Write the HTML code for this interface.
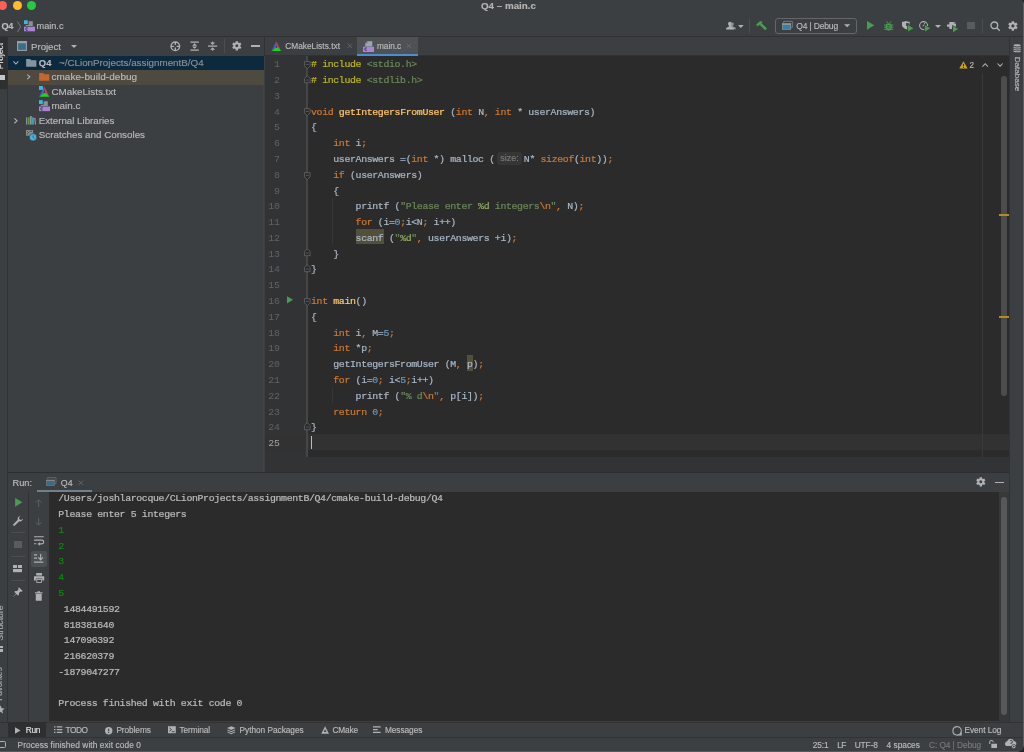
<!DOCTYPE html>
<html lang="en">
<head>
<meta charset="utf-8">
<title>Q4 – main.c</title>
<style>
*{box-sizing:border-box;margin:0;padding:0}
html,body{width:1024px;height:752px;overflow:hidden;background:#3c3f41}
body{position:relative;font-family:"Liberation Sans",sans-serif;font-size:9.3px;color:#bbbbbb;-webkit-font-smoothing:antialiased}
.abs{position:absolute}
.t{position:absolute;white-space:nowrap;line-height:12px;height:12px;-webkit-text-stroke:0.15px}
.mono{font-family:"Liberation Mono",monospace}
svg{position:absolute;overflow:visible}
/* ---------- frame ---------- */
#titlebar{left:0;top:0;width:1024px;height:16px;background:#3c3f41}
#navbar{left:0;top:16px;width:1024px;height:20.8px;background:#3c3f41;border-bottom:1px solid #323232}
#leftstrip{left:0;top:36.8px;width:8px;height:685px;background:#3c3f41;border-right:1px solid #323232}
#leftsel{left:0;top:36.8px;width:7.4px;height:52px;background:#2d2f30}
#rightstrip{left:1009px;top:36.8px;width:15px;height:685px;background:#3c3f41;border-left:1px solid #323232}
#rightedge{left:1023px;top:3px;width:1px;height:745px;background:#5c5f61}
/* project */
#projhead{left:8px;top:36.8px;width:256px;height:19.2px;background:#3c3f41}
#proj{left:8px;top:56px;width:256px;height:416px;background:#3c3f41}
#projdiv{left:264px;top:36.8px;width:1px;height:19.2px;background:#323232}
#projdiv2{left:263.2px;top:56px;width:1.3px;height:416.5px;background:#414446}
.row{position:absolute;left:8px;width:256px;height:14.4px}
/* editor */
#tabs{left:265px;top:36.8px;width:744px;height:19.2px;background:#3c3f41;border-bottom:1px solid #323232}
#tabsel{left:357.2px;top:36.8px;width:61px;height:19.2px;background:#4e5254;border-bottom:2.2px solid #4a8dd0}
#gutter{left:264.5px;top:56px;width:43.5px;height:401px;background:#313335;border-right:1px solid #313335}
#editor{left:308px;top:56px;width:701px;height:401px;background:#2b2b2b}
#curline{left:264.5px;top:434.3px;width:744.5px;height:15.8px;background:#323232}
#edbottom{left:264.5px;top:457px;width:744.5px;height:16px;background:#313335}
#margin{left:982px;top:56px;width:1px;height:401px;background:#3a3a3a}
.ln{position:absolute;left:265px;width:14.5px;text-align:right;color:#606366;font-family:"Liberation Mono",monospace;font-size:9.28px;line-height:15.79px;height:15.79px}
.cl{position:absolute;left:311px;white-space:pre;color:#a9b7c6;font-family:"Liberation Mono",monospace;font-size:9.28px;line-height:15.79px;height:15.79px}
.k{color:#cc7832}.s{color:#6a8759}.n{color:#6897bb}.f{color:#ffc66d}.p{color:#bbb529}
/* run */
#runhead{left:8px;top:472px;width:1001.5px;height:20.5px;background:#3c3f41;border-top:1px solid #2c2e2f}
#runbody{left:49px;top:492.4px;width:960.5px;height:229px;background:#2b2b2b}
#runleft{left:8px;top:492.4px;width:41px;height:229px;background:#3c3f41}
.co{position:absolute;left:58px;white-space:pre;color:#bbbbbb;font-family:"Liberation Mono",monospace;font-size:9.28px;line-height:15.79px;height:15.79px}
/* bottom */
#toolbar2{left:0;top:721.6px;width:1024px;height:17px;background:#3c3f41;border-top:1px solid #323232}
#textlayer{left:0;top:0;width:1024px;height:752px;will-change:transform}
#status{left:0;top:737.4px;width:1024px;height:14px;background:#3c3f41;border-top:1px solid #323232}
.cl,.co{-webkit-text-stroke:0.22px}.ln,.cl{font-size:9.9px;letter-spacing:-0.356px}.cl{left:311.0px}.fm{color:#8fa764}.w{}.hint{display:inline-block;width:29px;height:1px}
.co{left:58.3px;font-size:9.9px;letter-spacing:-0.356px}
</style>
</head>
<body>
<!-- frame -->
<div class="abs" id="titlebar"></div>
<div class="abs" id="navbar"></div>
<div class="abs" id="leftstrip"></div>
<div class="abs" id="leftsel"></div>
<div class="abs" id="projhead"></div>
<div class="abs" id="proj"></div>
<div class="abs" id="projdiv"></div>
<div class="abs" id="projdiv2"></div>
<div class="abs" id="tabs"></div>
<div class="abs" id="tabsel"></div>
<div class="abs" id="gutter"></div>
<div class="abs" id="editor"></div>
<div class="abs" id="curline"></div>
<div class="abs" id="margin"></div>
<div class="abs" id="edbottom"></div>
<div class="abs" id="runhead"></div>
<div class="abs" id="runleft"></div>
<div class="abs" id="runbody"></div>
<div class="abs" id="rightstrip"></div>
<div class="abs" id="toolbar2"></div>
<div class="abs" id="status"></div>
<div class="abs" id="rightedge"></div>
<div class="abs" id="textlayer">
<div class="abs" style="left:-2.1px;top:1px;width:9px;height:9px;border-radius:50%;background:#fe5f57"></div>
<div class="abs" style="left:13.0px;top:1px;width:9px;height:9px;border-radius:50%;background:#febc2e"></div>
<div class="abs" style="left:27.1px;top:1px;width:9px;height:9px;border-radius:50%;background:#28c840"></div>
<div class="abs" style="left:1021px;top:0;width:3px;height:3px;background:radial-gradient(circle at 0 100%,rgba(0,0,0,0) 2.4px,#232526 3.2px)"></div>
<svg style="left:16.50px;top:20.50px" width="4.20" height="11.50" viewBox="0 0 4 11" ><path d="M0.5,0.5L3.5,5.5L0.5,10.5" stroke="#7a7d80" stroke-width="0.9" fill="none"/></svg>
<svg style="left:23.50px;top:19.80px" width="11.00" height="11.60" viewBox="0 0 22 22" ><rect x="0" y="0" width="7.6" height="7.6" fill="#40b6e0"/><path d="M9.4,2H17.6V11.6H3.4V9.2H9.4Z" fill="#87939a"/><rect x="0" y="12.8" width="22" height="9.2" fill="#a985d3"/><path d="M7.4,15.4A2.6,2.6 0 1,0 7.4,19.8" stroke="#2e2040" stroke-width="1.7" fill="none"/></svg>
<svg style="left:726.10px;top:21.00px" width="9.90" height="9.00" viewBox="-0.4 0 16 13" ><path d="M9.8,1.2c1.5,0 2.5,1.2 2.5,2.8c0,1.3-0.6,2.5-1.4,3l0.1,1.2l3.6,1.6c0.6,0.3 0.9,0.8 0.9,1.5V12.6H6V11.2z" fill="#8c8f91"/><path d="M6,0.4c1.8,0 3,1.4 3,3.2c0,1.5-0.7,2.8-1.6,3.4l0.1,1.3l3.8,1.7c0.7,0.3 1.1,0.9 1.1,1.7V13H-0.4V11.7c0-0.8 0.4-1.4 1.1-1.7l3.8-1.7l0.1-1.3C3.7,6.4 3,5.1 3,3.6C3,1.8 4.2,0.4 6,0.4z" fill="#afb1b3"/></svg>
<svg style="left:738.10px;top:25.00px" width="5.70" height="3.00" viewBox="0 0 10 5" ><path d="M0,0H10L5,5Z" fill="#afb1b3"/></svg>
<div class="abs" style="left:749.3px;top:18.8px;width:1px;height:14.0px;background:#4b4e50"></div>
<svg style="left:756.00px;top:20.60px" width="11.00" height="9.60" viewBox="0 0 14 12" ><path d="M0.1,4.4L5.0,0.1L8.9,0.5L7,2.4L14,9.3L11.6,11.8L4.7,4.8L2.3,6.9Z" fill="#499c54"/></svg>
<div class="abs" style="left:775.2px;top:18.1px;width:82px;height:15.6px;border:1px solid #646769;border-radius:3px"></div>
<svg style="left:782.10px;top:21.00px" width="10.60" height="8.70" viewBox="0 0 22 18" ><path d="M3.5,3.6V0.6H21.4V13.2H19" stroke="#9aa0a4" stroke-width="1.2" fill="none"/><rect x="0.6" y="5.6" width="17.6" height="11.6" fill="#3a7f9f" stroke="#9aa0a4" stroke-width="1.2"/><rect x="0.6" y="5.6" width="17.6" height="2.2" fill="#9aa0a4"/></svg>
<svg style="left:843.90px;top:24.10px" width="6.30" height="3.50" viewBox="0 0 10 5" ><path d="M0,0H10L5,5Z" fill="#afb1b3"/></svg>
<svg style="left:866.90px;top:21.40px" width="7.30" height="8.70" viewBox="0 0 10 12" ><path d="M0,0L10,6L0,12Z" fill="#499c54"/></svg>
<svg style="left:883.80px;top:21.00px" width="9.50" height="9.80" viewBox="0 0 12 12.2" ><rect x="2.1" y="2.8" width="7.8" height="9.2" rx="3.8" fill="#499c54"/><path d="M3.2,0.3L4.9,2.6M8.8,0.3L7.1,2.6" stroke="#499c54" stroke-width="1.2" fill="none"/><path d="M0.2,5H2.4M9.6,5H11.8M0.2,7.7H2.4M9.6,7.7H11.8M0.4,10.6H2.6M9.4,10.6H11.6" stroke="#499c54" stroke-width="1.25" fill="none"/><path d="M3.9,5.9H8.1M3.9,8.6H8.1" stroke="#3c3f41" stroke-width="1.05"/></svg>
<svg style="left:901.80px;top:21.40px" width="7.70" height="8.80" viewBox="0 -0.2 10 11.4" ><path d="M0,0.8C2.5,0.8 4,0.3 5,-0.2C6,0.3 7.5,0.8 10,0.8V5.6H7.2V11C3.5,9.8 0,8 0,4.6Z" fill="#afb1b3"/><path d="M5,0.9V10" stroke="#3c3f41" stroke-width="0" /></svg>
<div class="abs" style="left:906.2px;top:22.6px;width:3.6px;height:3.4px;background:#4a4d4f;border-radius:0 2px 0 0"></div>
<svg style="left:907.80px;top:24.90px" width="5.40" height="6.70" viewBox="0 0 10 12" ><path d="M0,0L10,6L0,12Z" fill="#499c54" stroke="#3c3f41" stroke-width="2.6" paint-order="stroke"/></svg>
<svg style="left:919.00px;top:21.20px" width="9.20" height="9.20" viewBox="0 0 12 12" ><circle cx="6" cy="6" r="5.2" stroke="#afb1b3" stroke-width="1.35" fill="none"/><path d="M6,6.6L7.6,2.6" stroke="#afb1b3" stroke-width="1.2"/><path d="M6,6.4H4.6" stroke="#afb1b3" stroke-width="1.0"/></svg>
<svg style="left:924.80px;top:24.90px" width="5.20" height="6.70" viewBox="0 0 10 12" ><path d="M0,0L10,6L0,12Z" fill="#499c54" stroke="#3c3f41" stroke-width="2.6" paint-order="stroke"/></svg>
<svg style="left:935.00px;top:25.00px" width="6.00" height="3.00" viewBox="0 0 10 5" ><path d="M0,0H10L5,5Z" fill="#afb1b3"/></svg>
<svg style="left:947.00px;top:21.60px" width="9.00" height="7.20" viewBox="0 0 11.6 9" ><path d="M3,0H9.6V2H11.6V6H6.4V9H3V6H0V3.2H3Z" fill="#afb1b3"/><rect x="8.4" y="0.4" width="2.6" height="1.4" fill="#8c8f91"/></svg>
<svg style="left:953.10px;top:25.50px" width="5.20" height="6.20" viewBox="0 0 10 12" ><path d="M0,0L10,6L0,12Z" fill="#499c54" stroke="#3c3f41" stroke-width="2.6" paint-order="stroke"/></svg>
<div class="abs" style="left:967.1px;top:21.8px;width:7.8px;height:7.6px;background:#595c5e"></div>
<div class="abs" style="left:982.3px;top:18.9px;width:1px;height:14.0px;background:#4b4e50"></div>
<svg style="left:989.50px;top:20.60px" width="10.40" height="10.40" viewBox="0 0 13 13" ><circle cx="5.4" cy="5.4" r="4.2" stroke="#afb1b3" stroke-width="1.7" fill="none"/><path d="M8.4,8.4L12.2,12.2" stroke="#afb1b3" stroke-width="1.7"/></svg>
<svg style="left:1008.40px;top:21.10px" width="9.80" height="9.80" viewBox="0 0 16 16" ><path d="M5.92,2.48 L6.10,0.23 L9.90,0.23 L10.08,2.48 L11.74,3.44 L13.78,2.47 L15.68,5.76 L13.82,7.04 L13.82,8.96 L15.68,10.24 L13.78,13.53 L11.74,12.56 L10.08,13.52 L9.90,15.77 L6.10,15.77 L5.92,13.52 L4.26,12.56 L2.22,13.53 L0.32,10.24 L2.18,8.96 L2.18,7.04 L0.32,5.76 L2.22,2.47 L4.26,3.44Z M10.5,8 A2.5,2.5 0 1,0 5.5,8 A2.5,2.5 0 1,0 10.5,8Z" fill="#afb1b3" fill-rule="evenodd"/></svg>
<div class="row" style="top:55.8px;height:14.2px;background:#0d293e"></div>
<div class="row" style="top:70px;height:14.5px;background:#4e4a3f"></div>
<svg style="left:17.00px;top:41.00px" width="10.00" height="10.00" viewBox="0 0 10 10" ><rect x="0.6" y="0.6" width="8.8" height="8.8" fill="#356f88" stroke="#9aa0a4" stroke-width="1.1"/><rect x="0.6" y="0.6" width="8.8" height="1.7" fill="#9aa0a4"/></svg>
<svg style="left:71.00px;top:45.00px" width="6.00" height="3.00" viewBox="0 0 10 5" ><path d="M0,0H10L5,5Z" fill="#afb1b3"/></svg>
<svg style="left:170.20px;top:40.50px" width="10.60" height="10.60" viewBox="0 0 16 16" ><circle cx="8" cy="8" r="6.5" stroke="#afb1b3" stroke-width="2" fill="none"/><path d="M8,1.4V6M8,10V14.6M1.4,8H6M10,8H14.6" stroke="#afb1b3" stroke-width="2"/></svg>
<svg style="left:189.60px;top:40.90px" width="9.20" height="10.20" viewBox="0 0 14 14" ><path d="M0.6,1H13.4M0.6,13H13.4" stroke="#afb1b3" stroke-width="1.9"/><path d="M7,2.8L10.8,6.4H3.2ZM7,11.2L10.8,7.6H3.2Z" fill="#afb1b3"/></svg>
<svg style="left:208.00px;top:40.90px" width="9.20" height="10.20" viewBox="0 0 14 14" ><path d="M0,7H14" stroke="#afb1b3" stroke-width="1.9"/><path d="M7,5.2L10.8,1.4H3.2ZM7,8.8L10.8,12.6H3.2Z" fill="#afb1b3"/><path d="M7,0V2M7,12V14" stroke="#afb1b3" stroke-width="1.6"/></svg>
<div class="abs" style="left:224.4px;top:38.8px;width:1px;height:14.2px;background:#4b4e50"></div>
<svg style="left:231.60px;top:41.10px" width="9.60" height="9.60" viewBox="0 0 16 16" ><path d="M5.92,2.48 L6.10,0.23 L9.90,0.23 L10.08,2.48 L11.74,3.44 L13.78,2.47 L15.68,5.76 L13.82,7.04 L13.82,8.96 L15.68,10.24 L13.78,13.53 L11.74,12.56 L10.08,13.52 L9.90,15.77 L6.10,15.77 L5.92,13.52 L4.26,12.56 L2.22,13.53 L0.32,10.24 L2.18,8.96 L2.18,7.04 L0.32,5.76 L2.22,2.47 L4.26,3.44Z M10.5,8 A2.5,2.5 0 1,0 5.5,8 A2.5,2.5 0 1,0 10.5,8Z" fill="#afb1b3" fill-rule="evenodd"/></svg>
<div class="abs" style="left:250.8px;top:45.3px;width:9.0px;height:1.3px;background:#afb1b3"></div>
<svg style="left:13.30px;top:61.20px" width="5.80" height="3.60" viewBox="0 0 6 4" ><path d="M0.3,0.4L3,3.4L5.7,0.4" stroke="#afb1b3" stroke-width="1.14" fill="none"/></svg>
<svg style="left:25.70px;top:59.10px" width="10.50" height="7.80" viewBox="0 0 21 16" ><path d="M0,0H8.2L10.4,2.6H21V16H0Z" fill="#8595a0"/></svg>
<svg style="left:27.10px;top:74.30px" width="3.40" height="5.70" viewBox="0 0 4 6" ><path d="M0.4,0.3L3.4,3L0.4,5.7" stroke="#afb1b3" stroke-width="1.29" fill="none"/></svg>
<svg style="left:38.60px;top:73.10px" width="10.50" height="7.80" viewBox="0 0 21 16" ><path d="M0,0H8.2L10.4,2.6H21V16H0Z" fill="#c8642d"/></svg>
<svg style="left:38.60px;top:86.00px" width="10.50" height="11.00" viewBox="0 0 21 22" ><polygon points="10.4,0.3 0.3,21.6 9.2,14.6 10.9,9.2" fill="#4360d6"/><polygon points="10.4,0.3 20.8,21.6 13.2,13.2 10.9,9.2" fill="#d8404a"/><polygon points="0.3,21.6 20.8,21.6 13.2,13.2 9.2,14.6" fill="#27cf2c"/><polygon points="10.9,9.2 9.2,14.6 13.2,13.2" fill="#3b3560"/><rect x="0" y="0" width="7.8" height="7.8" fill="#40b6e0"/></svg>
<svg style="left:38.60px;top:100.30px" width="11.00" height="11.30" viewBox="0 0 22 22" ><rect x="0" y="0" width="7.6" height="7.6" fill="#40b6e0"/><path d="M9.4,2H17.6V11.6H3.4V9.2H9.4Z" fill="#87939a"/><rect x="0" y="12.8" width="22" height="9.2" fill="#a985d3"/><path d="M7.4,15.4A2.6,2.6 0 1,0 7.4,19.8" stroke="#2e2040" stroke-width="1.7" fill="none"/></svg>
<svg style="left:14.00px;top:117.70px" width="3.60" height="5.60" viewBox="0 0 4 6" ><path d="M0.4,0.3L3.4,3L0.4,5.7" stroke="#afb1b3" stroke-width="1.22" fill="none"/></svg>
<svg style="left:26.00px;top:115.60px" width="10.20" height="8.60" viewBox="0 0 11.2 10" ><rect x="0" y="1.6" width="1.1" height="8.4" fill="#afb1b3"/><rect x="2.2" y="1.6" width="1.5" height="8.4" fill="#62b543"/><rect x="4.6" y="0" width="1.5" height="10" fill="#afb1b3"/><rect x="6.9" y="1.6" width="1.8" height="8.4" fill="#40b6e0"/><path d="M9.4,2.2L10.5,2L11.2,10H10.1Z" fill="#afb1b3"/></svg>
<svg style="left:26.10px;top:129.90px" width="11.00" height="11.00" viewBox="0 0 12.4 12.4" ><rect x="0" y="0" width="8" height="6.4" fill="#8b8e90"/><path d="M1.2,1.4L3,3L1.2,4.6" stroke="#3c3f41" stroke-width="0.9" fill="none"/><path d="M4,1.4H7" stroke="#3c3f41" stroke-width="0.9"/><circle cx="8" cy="8.2" r="4.2" fill="#40b6e0" stroke="#3c3f41" stroke-width="0.8"/><path d="M8,6V8.4L9.6,9.6" stroke="#2b5a70" stroke-width="0.9" fill="none"/></svg>
<div class="abs" style="left:0;top:36px;width:7.6px;height:685px;overflow:hidden"><div class="t" style="left:-39.9px;top:13.6px;width:80px;text-align:center;transform:rotate(-90deg);font-size:8.5px;color:#dcdcdc">Project</div><div class="abs" style="left:-1px;top:39.2px;width:5.5px;height:4.6px;background:#c4c6c7"></div><div class="t" style="left:-39.9px;top:581px;width:80px;text-align:center;transform:rotate(-90deg);font-size:8.7px;color:#a9abad">Structure</div><div class="abs" style="left:0px;top:609.5px;width:3.4px;height:2.4px;background:#afb1b3"></div><div class="abs" style="left:0px;top:613.4px;width:3.4px;height:2.4px;background:#afb1b3"></div><div class="t" style="left:-39.9px;top:642.3px;width:80px;text-align:center;transform:rotate(-90deg);font-size:8.15px;color:#a9abad">Favorites</div><svg style="left:-4.2px;top:669px" width="8.8" height="8.8" viewBox="0 0 10 10"><path d="M5,0.3L6.4,3.6L9.8,3.9L7.2,6.2L8,9.6L5,7.8L2,9.6L2.8,6.2L0.2,3.9L3.6,3.6Z" fill="#afb1b3"/></svg></div>
<svg style="left:271.30px;top:41.00px" width="10.70" height="10.20" viewBox="0 0 21 22" ><polygon points="10.4,0.3 0.3,21.6 9.2,14.6 10.9,9.2" fill="#4360d6"/><polygon points="10.4,0.3 20.8,21.6 13.2,13.2 10.9,9.2" fill="#d8404a"/><polygon points="0.3,21.6 20.8,21.6 13.2,13.2 9.2,14.6" fill="#27cf2c"/><polygon points="10.9,9.2 9.2,14.6 13.2,13.2" fill="#3b3560"/></svg>
<svg style="left:346.60px;top:43.20px" width="5.60" height="5.60" viewBox="0 0 10 10" ><path d="M1,1L9,9M9,1L1,9" stroke="#6e7173" stroke-width="1.3" fill="none"/></svg>
<svg style="left:362.90px;top:40.80px" width="11.10" height="11.00" viewBox="0 0 22 22" ><path d="M8.6,0.6H18.4V10.8H4.2V5Z" fill="#9aa7b0"/><path d="M8.6,0.6V5H4.2Z" fill="#6f7a82"/><rect x="0" y="11.4" width="22" height="10.6" fill="#a985d3"/><path d="M7.4,14.0A2.6,2.6 0 1,0 7.4,18.4" stroke="#2e2040" stroke-width="1.7" fill="none"/></svg>
<svg style="left:406.30px;top:43.15px" width="5.70" height="5.70" viewBox="0 0 10 10" ><path d="M1,1L9,9M9,1L1,9" stroke="#6e7173" stroke-width="1.3" fill="none"/></svg>
<div class="abs" style="left:955px;top:57px;width:53px;height:15.7px;background:#2b2b2b"></div>
<svg style="left:958.70px;top:61.20px" width="8.90" height="7.90" viewBox="0 0 12 11" ><path d="M6,0.4L11.8,10.6H0.2Z" fill="#d5a21c"/><path d="M6,3.8V7.2" stroke="#2b2b2b" stroke-width="1.5"/><rect x="5.25" y="8.1" width="1.5" height="1.4" fill="#2b2b2b"/></svg>
<svg style="left:982.10px;top:62.90px" width="6.40" height="4.00" viewBox="0 0 8 5" ><path d="M0.6,4.4L4,0.9L7.4,4.4" stroke="#afb1b3" stroke-width="1.3" fill="none"/></svg>
<svg style="left:997.40px;top:63.20px" width="6.20" height="3.90" viewBox="0 0 8 5" ><path d="M0.6,0.6L4,4.1L7.4,0.6" stroke="#afb1b3" stroke-width="1.3" fill="none"/></svg>
<svg style="left:1012.50px;top:44.00px" width="8.20" height="8.60" viewBox="0 0 10 11" ><ellipse cx="5" cy="1.7" rx="4.6" ry="1.5" fill="#afb1b3"/><path d="M0.4,3V4.4A4.6,1.5 0 0,0 9.6,4.4V3A4.6,1.5 0 0,1 0.4,3Z" fill="#afb1b3"/><path d="M0.4,5.4V6.8A4.6,1.5 0 0,0 9.6,6.8V5.4A4.6,1.5 0 0,1 0.4,5.4Z" fill="#afb1b3"/><path d="M0.4,7.8V9.2A4.6,1.5 0 0,0 9.6,9.2V7.8A4.6,1.5 0 0,1 0.4,7.8Z" fill="#afb1b3"/></svg>
<div class="t" style="left:976.5px;top:67.7px;width:80px;text-align:center;transform:rotate(90deg);font-size:8.1px">Database</div>
<div class="abs" style="left:332.4px;top:197.6px;width:1px;height:47.3px;background:#363636"></div>
<div class="abs" style="left:332.4px;top:387.0px;width:1px;height:15.8px;background:#363636"></div>
<div class="abs" style="left:355.7px;top:229.0px;width:27.9px;height:15.4px;background:#52503a"></div>
<div class="abs" style="left:467.4px;top:355.2px;width:5.6px;height:15.4px;background:#52503a"></div>
<div class="abs" style="left:496.9px;top:151.9px;width:25.3px;height:12.8px;background:#363636;border-radius:3px"></div>
<div class="ln" style="top:57.35px;color:#606366">1</div>
<div class="cl" style="top:57.35px"><span class="p"># include </span><span class="s">&lt;stdio.h&gt;</span></div>
<div class="ln" style="top:73.13px;color:#606366">2</div>
<div class="cl" style="top:73.13px"><span class="p"># include </span><span class="s">&lt;stdlib.h&gt;</span></div>
<div class="ln" style="top:88.91px;color:#606366">3</div>
<div class="ln" style="top:104.69px;color:#606366">4</div>
<div class="cl" style="top:104.69px"><span class="k">void </span><span class="f">getIntegersFromUser</span> (<span class="k">int</span> N<span class="k">,</span> <span class="k">int</span> * userAnswers)</div>
<div class="ln" style="top:120.47px;color:#606366">5</div>
<div class="cl" style="top:120.47px">{</div>
<div class="ln" style="top:136.25px;color:#606366">6</div>
<div class="cl" style="top:136.25px">    <span class="k">int</span> i<span class="k">;</span></div>
<div class="ln" style="top:152.03px;color:#606366">7</div>
<div class="cl" style="top:152.03px">    userAnswers =(<span class="k">int</span> *) malloc (<span class="hint"></span>N* <span class="k">sizeof</span>(<span class="k">int</span>))<span class="k">;</span></div>
<div class="ln" style="top:167.81px;color:#606366">8</div>
<div class="cl" style="top:167.81px">    <span class="k">if</span> (userAnswers)</div>
<div class="ln" style="top:183.59px;color:#606366">9</div>
<div class="cl" style="top:183.59px">    {</div>
<div class="ln" style="top:199.37px;color:#606366">10</div>
<div class="cl" style="top:199.37px">        printf (<span class="s">&quot;Please enter </span><span class="fm">%d</span><span class="s"> integers</span><span class="k">\n</span><span class="s">&quot;</span><span class="k">,</span> N)<span class="k">;</span></div>
<div class="ln" style="top:215.15px;color:#606366">11</div>
<div class="cl" style="top:215.15px">        <span class="k">for</span> (i=<span class="n">0</span><span class="k">;</span>i&lt;N<span class="k">;</span> i++)</div>
<div class="ln" style="top:230.93px;color:#606366">12</div>
<div class="cl" style="top:230.93px">        <span class="w">scanf</span> (<span class="s">&quot;</span><span class="fm">%d</span><span class="s">&quot;</span><span class="k">,</span> userAnswers +i)<span class="k">;</span></div>
<div class="ln" style="top:246.71px;color:#606366">13</div>
<div class="cl" style="top:246.71px">    }</div>
<div class="ln" style="top:262.49px;color:#606366">14</div>
<div class="cl" style="top:262.49px">}</div>
<div class="ln" style="top:278.27px;color:#606366">15</div>
<div class="ln" style="top:294.05px;color:#606366">16</div>
<div class="cl" style="top:294.05px"><span class="k">int</span> <span class="f">main</span>()</div>
<div class="ln" style="top:309.83px;color:#606366">17</div>
<div class="cl" style="top:309.83px">{</div>
<div class="ln" style="top:325.61px;color:#606366">18</div>
<div class="cl" style="top:325.61px">    <span class="k">int</span> i<span class="k">,</span> M=<span class="n">5</span><span class="k">;</span></div>
<div class="ln" style="top:341.39px;color:#606366">19</div>
<div class="cl" style="top:341.39px">    <span class="k">int</span> *p<span class="k">;</span></div>
<div class="ln" style="top:357.17px;color:#606366">20</div>
<div class="cl" style="top:357.17px">    getIntegersFromUser (M<span class="k">,</span> <span class="w">p</span>)<span class="k">;</span></div>
<div class="ln" style="top:372.95px;color:#606366">21</div>
<div class="cl" style="top:372.95px">    <span class="k">for</span> (i=<span class="n">0</span><span class="k">;</span> i&lt;<span class="n">5</span><span class="k">;</span>i++)</div>
<div class="ln" style="top:388.73px;color:#606366">22</div>
<div class="cl" style="top:388.73px">        printf (<span class="s">&quot;% d</span><span class="k">\n</span><span class="s">&quot;</span><span class="k">,</span> p[i])<span class="k">;</span></div>
<div class="ln" style="top:404.51px;color:#606366">23</div>
<div class="cl" style="top:404.51px">    <span class="k">return</span> <span class="n">0</span><span class="k">;</span></div>
<div class="ln" style="top:420.29px;color:#606366">24</div>
<div class="cl" style="top:420.29px">}</div>
<div class="ln" style="top:436.07px;color:#a4a3a3">25</div>
<div class="abs" style="left:311px;top:436.3px;width:1.3px;height:12.4px;background:#bbbbbb"></div>
<div class="abs" style="left:306.4px;top:56px;width:1.4px;height:401px;background:#454647"></div>
<svg style="left:303.70px;top:61.09px" width="6.60" height="8.40" viewBox="0 0 7 8.5" ><path d="M0.5,0.5H6.5V5L3.5,8L0.5,5Z" fill="#2b2b2b" stroke="#606366" stroke-width="0.9"/><path d="M2,3.4H5" stroke="#606366" stroke-width="0.9"/></svg>
<svg style="left:303.70px;top:74.67px" width="6.60" height="8.40" viewBox="0 0 7 8.5" ><path d="M0.5,8H6.5V3.5L3.5,0.5L0.5,3.5Z" fill="#2b2b2b" stroke="#606366" stroke-width="0.9"/><path d="M2,5.2H5" stroke="#606366" stroke-width="0.9"/></svg>
<svg style="left:303.70px;top:108.43px" width="6.60" height="8.40" viewBox="0 0 7 8.5" ><path d="M0.5,0.5H6.5V5L3.5,8L0.5,5Z" fill="#2b2b2b" stroke="#606366" stroke-width="0.9"/><path d="M2,3.4H5" stroke="#606366" stroke-width="0.9"/></svg>
<svg style="left:303.70px;top:171.55px" width="6.60" height="8.40" viewBox="0 0 7 8.5" ><path d="M0.5,0.5H6.5V5L3.5,8L0.5,5Z" fill="#2b2b2b" stroke="#606366" stroke-width="0.9"/><path d="M2,3.4H5" stroke="#606366" stroke-width="0.9"/></svg>
<svg style="left:303.70px;top:248.25px" width="6.60" height="8.40" viewBox="0 0 7 8.5" ><path d="M0.5,8H6.5V3.5L3.5,0.5L0.5,3.5Z" fill="#2b2b2b" stroke="#606366" stroke-width="0.9"/><path d="M2,5.2H5" stroke="#606366" stroke-width="0.9"/></svg>
<svg style="left:303.70px;top:264.03px" width="6.60" height="8.40" viewBox="0 0 7 8.5" ><path d="M0.5,8H6.5V3.5L3.5,0.5L0.5,3.5Z" fill="#2b2b2b" stroke="#606366" stroke-width="0.9"/><path d="M2,5.2H5" stroke="#606366" stroke-width="0.9"/></svg>
<svg style="left:303.70px;top:297.79px" width="6.60" height="8.40" viewBox="0 0 7 8.5" ><path d="M0.5,0.5H6.5V5L3.5,8L0.5,5Z" fill="#2b2b2b" stroke="#606366" stroke-width="0.9"/><path d="M2,3.4H5" stroke="#606366" stroke-width="0.9"/></svg>
<svg style="left:303.70px;top:421.83px" width="6.60" height="8.40" viewBox="0 0 7 8.5" ><path d="M0.5,8H6.5V3.5L3.5,0.5L0.5,3.5Z" fill="#2b2b2b" stroke="#606366" stroke-width="0.9"/><path d="M2,5.2H5" stroke="#606366" stroke-width="0.9"/></svg>
<svg style="left:286.70px;top:296.40px" width="6.00" height="7.60" viewBox="0 0 10 12" ><path d="M0,0L10,6L0,12Z" fill="#499c54"/></svg>
<div class="abs" style="left:1001.1px;top:75.7px;width:6px;height:320.5px;border-radius:3px;background:#4c4c4c"></div>
<div class="abs" style="left:999px;top:213.9px;width:10px;height:2.2px;background:#b58d1c"></div>
<div class="abs" style="left:999px;top:315.8px;width:10px;height:2.2px;background:#b58d1c"></div>
<div class="abs" style="left:49px;top:492.4px;width:960px;height:229px;overflow:hidden">
<div class="co" style="top:-1.05px;left:9.30px;">/Users/joshlarocque/CLionProjects/assignmentB/Q4/cmake-build-debug/Q4</div>
<div class="co" style="top:14.73px;left:9.30px;">Please enter 5 integers</div>
<div class="co" style="top:30.51px;left:9.30px;color:#0a8a0a;">1</div>
<div class="co" style="top:46.29px;left:9.30px;color:#0a8a0a;">2</div>
<div class="co" style="top:62.07px;left:9.30px;color:#0a8a0a;">3</div>
<div class="co" style="top:77.85px;left:9.30px;color:#0a8a0a;">4</div>
<div class="co" style="top:93.63px;left:9.30px;color:#0a8a0a;">5</div>
<div class="co" style="top:109.41px;left:9.30px;"> 1484491592</div>
<div class="co" style="top:125.19px;left:9.30px;"> 818381640</div>
<div class="co" style="top:140.97px;left:9.30px;"> 147096392</div>
<div class="co" style="top:156.75px;left:9.30px;"> 216620379</div>
<div class="co" style="top:172.53px;left:9.30px;">-1879047277</div>
<div class="co" style="top:204.09px;left:9.30px;">Process finished with exit code 0</div>
</div>
<svg opacity="0.72" style="left:46.30px;top:477.30px" width="10.30" height="9.20" viewBox="0 0 22 18" ><path d="M3.5,3.6V0.6H21.4V13.2H19" stroke="#9aa0a4" stroke-width="1.2" fill="none"/><rect x="0.6" y="5.6" width="17.6" height="11.6" fill="#3a7f9f" stroke="#9aa0a4" stroke-width="1.2"/><rect x="0.6" y="5.6" width="17.6" height="2.2" fill="#9aa0a4"/></svg>
<svg style="left:78.30px;top:480.25px" width="5.50" height="5.50" viewBox="0 0 10 10" ><path d="M1,1L9,9M9,1L1,9" stroke="#6e7173" stroke-width="1.3" fill="none"/></svg>
<div class="abs" style="left:37px;top:490px;width:55.2px;height:2.4px;background:#73808a"></div>
<svg style="left:976.10px;top:477.40px" width="9.60" height="9.60" viewBox="0 0 16 16" ><path d="M5.92,2.48 L6.10,0.23 L9.90,0.23 L10.08,2.48 L11.74,3.44 L13.78,2.47 L15.68,5.76 L13.82,7.04 L13.82,8.96 L15.68,10.24 L13.78,13.53 L11.74,12.56 L10.08,13.52 L9.90,15.77 L6.10,15.77 L5.92,13.52 L4.26,12.56 L2.22,13.53 L0.32,10.24 L2.18,8.96 L2.18,7.04 L0.32,5.76 L2.22,2.47 L4.26,3.44Z M10.5,8 A2.5,2.5 0 1,0 5.5,8 A2.5,2.5 0 1,0 10.5,8Z" fill="#afb1b3" fill-rule="evenodd"/></svg>
<div class="abs" style="left:994.8px;top:481.6px;width:9.3px;height:1.3px;background:#afb1b3"></div>
<svg style="left:14.80px;top:498.30px" width="7.50" height="8.70" viewBox="0 0 10 12" ><path d="M0,0L10,6L0,12Z" fill="#499c54"/></svg>
<svg style="left:13.00px;top:516.00px" width="10.00" height="10.00" viewBox="0 0 15 15" ><path d="M11.2,0.3A3.9,3.9 0 0,0 7.2,5.6L0.6,12.2A1.5,1.5 0 0,0 2.8,14.4L9.4,7.8A3.9,3.9 0 0,0 14.7,3.8L12.4,6.1L9.9,5.1L8.9,2.6Z" fill="#afb1b3"/></svg>
<div class="abs" style="left:11.0px;top:532.4px;width:13.8px;height:1px;background:#4b4e50"></div>
<div class="abs" style="left:14px;top:541px;width:8px;height:7.4px;background:#595c5e"></div>
<div class="abs" style="left:11.0px;top:555.8px;width:13.8px;height:1px;background:#4b4e50"></div>
<svg style="left:13.30px;top:564.80px" width="9.00" height="7.20" viewBox="0 0 9 7.2" ><rect x="0" y="0" width="4" height="3" fill="#afb1b3"/><rect x="5" y="0" width="4" height="3" fill="#afb1b3"/><rect x="0" y="4" width="9" height="3.2" fill="#afb1b3"/></svg>
<div class="abs" style="left:11.0px;top:580.0px;width:13.8px;height:1px;background:#4b4e50"></div>
<svg style="left:13.00px;top:587.20px" width="10.00" height="9.90" viewBox="0 0 14 14" ><path d="M8.2,0.4L13.6,5.8L12.2,6.6L10.6,6.2L8.4,8.4L8.2,11.2L6.8,12L4.6,9.8L0.4,13.8L0.2,13.6L4.2,9.4L2,7.2L2.8,5.8L5.6,5.6L7.8,3.4L7.4,1.8Z" fill="#afb1b3"/></svg>
<div class="abs" style="left:28.4px;top:492.4px;width:1px;height:229.0px;background:#323232"></div>
<svg style="left:35.00px;top:498.80px" width="7.30" height="9.00" viewBox="0 0 10 12" ><path d="M5,11V1.2M1,5L5,1L9,5" stroke="#5e6162" stroke-width="1.3" fill="none"/></svg>
<svg style="left:35.00px;top:517.20px" width="7.30" height="9.00" viewBox="0 0 10 12" ><path d="M5,1V10.8M1,7L5,11L9,7" stroke="#5e6162" stroke-width="1.3" fill="none"/></svg>
<svg style="left:33.80px;top:536.00px" width="9.80" height="10.00" viewBox="0 0 13 13.4" ><path d="M0,1H13M0,5.6H10.4A2.4,2.4 0 0,1 10.4,10.6H6.6M0,10.4H3" stroke="#afb1b3" stroke-width="1.5" fill="none"/><path d="M7.6,8L4.8,10.6L7.6,13.2Z" fill="#afb1b3"/></svg>
<div class="abs" style="left:31px;top:551px;width:15.8px;height:15.8px;border-radius:2px;background:#4c5052"></div>
<svg style="left:34.00px;top:554.40px" width="9.30" height="8.80" viewBox="0 0 12 11.4" ><path d="M0,1.2H4M0,5.2H4M0,10.6H12" stroke="#afb1b3" stroke-width="1.6"/><path d="M8.6,0V7M5.6,4.4L8.6,7.6L11.6,4.4" stroke="#afb1b3" stroke-width="1.5" fill="none"/></svg>
<svg style="left:33.80px;top:573.00px" width="10.20" height="10.00" viewBox="0 0 14 13.6" ><rect x="3" y="0" width="8" height="3.4" fill="#afb1b3"/><path d="M0,4.4H14V10.4H11.4V7.6H2.6V10.4H0Z" fill="#afb1b3"/><rect x="3.8" y="8.8" width="6.4" height="4.2" fill="none" stroke="#afb1b3" stroke-width="1.2"/></svg>
<svg style="left:35.00px;top:591.00px" width="7.50" height="9.80" viewBox="0 0 10 13.2" ><path d="M3.4,1.6V0.2H6.6V1.6H10V3.2H0V1.6Z" fill="#afb1b3"/><path d="M1,4.2H9V12.4A0.8,0.8 0 0,1 8.2,13.2H1.8A0.8,0.8 0 0,1 1,12.4Z" fill="#afb1b3"/></svg>
<div class="abs" style="left:998.8px;top:492.4px;width:10.7px;height:229.4px;background:#36393a"></div>
<div class="abs" style="left:1001.1px;top:496.6px;width:6px;height:218.4px;border-radius:3px;background:#565859"></div>
<div class="abs" style="left:7.6px;top:722px;width:38px;height:15.4px;background:#2d2f30"></div>
<svg style="left:15.00px;top:726.80px" width="5.60" height="7.00" viewBox="0 0 10 12" ><path d="M0,0L10,6L0,12Z" fill="#afb1b3"/></svg>
<svg style="left:54.00px;top:726.40px" width="8.30" height="7.40" viewBox="0 0 9 8" ><path d="M0,1H1.6M0,4H1.6M0,7H1.6M3,1H9M3,4H9M3,7H9" stroke="#afb1b3" stroke-width="1.3"/></svg>
<svg style="left:104.80px;top:726.50px" width="7.40" height="7.40" viewBox="0 0 10 10" ><circle cx="5" cy="5" r="5" fill="#afb1b3"/><path d="M5,2.2V5.8" stroke="#3c3f41" stroke-width="1.5"/><rect x="4.25" y="6.8" width="1.5" height="1.4" fill="#3c3f41"/></svg>
<svg style="left:168.00px;top:726.40px" width="7.80" height="7.40" viewBox="0 0 10 9" ><rect x="0" y="0" width="10" height="9" fill="#afb1b3"/><path d="M1.8,2.2L4.4,4.4L1.8,6.6" stroke="#3c3f41" stroke-width="1.2" fill="none"/><path d="M5,7H8.4" stroke="#3c3f41" stroke-width="1.2"/></svg>
<svg style="left:227.40px;top:725.90px" width="8.60" height="8.40" viewBox="0 0 12 11.2" ><path d="M6,0L12,2.6L6,5.2L0,2.6Z" fill="#afb1b3"/><path d="M0.6,5.2L6,7.6L11.4,5.2M0.6,8L6,10.4L11.4,8" stroke="#afb1b3" stroke-width="1.4" fill="none"/></svg>
<svg style="left:320.90px;top:726.10px" width="8.20" height="8.00" viewBox="0 0 10 10" ><path d="M5,0.4L9.8,9.6H0.2Z" fill="#afb1b3"/><path d="M5,3.6L6.6,7.6H3.4Z" fill="#3c3f41"/></svg>
<svg style="left:373.20px;top:726.40px" width="7.70" height="7.20" viewBox="0 0 9 8.4" ><path d="M0,1H9M0,4.2H5.6M0,7.4H9" stroke="#afb1b3" stroke-width="1.5"/></svg>
<svg style="left:952.00px;top:726.20px" width="10.00" height="9.40" viewBox="0 0 10.6 10.2" ><path d="M5.4,0.7A4.6,4.6 0 1,0 9.9,6.5V9.6H6.2" stroke="#afb1b3" stroke-width="1.2" fill="none"/><path d="M5.4,0.7A4.6,4.6 0 0,1 9.9,6.5" stroke="#afb1b3" stroke-width="1.2" fill="none"/></svg>
<div class="abs" style="left:-2px;top:741px;width:8px;height:6.8px;border:1px solid #afb1b3;border-radius:1.5px"></div>
<svg style="left:989.00px;top:740.20px" width="8.00" height="8.00" viewBox="0 0 9 9" ><path d="M0.8,4.4V2.6A2,2 0 0,1 4.8,2.6" stroke="#afb1b3" stroke-width="1.2" fill="none"/><rect x="2.6" y="4.2" width="6.4" height="4.8" fill="#afb1b3"/></svg>
<svg style="left:1005.20px;top:739.40px" width="11.60" height="10.00" viewBox="0 0 12.4 10.8" ><path d="M1,7.6A3,3 0 0,1 2.2,2.4A4,4 0 0,1 9.6,2.2A2.8,2.8 0 0,1 11.6,6.6V7.6Z" fill="#afb1b3"/><path d="M5.4,1.8A1.5,1.5 0 1,1 6.4,4.4V5.4" stroke="#3c3f41" stroke-width="1" fill="none"/><circle cx="9.4" cy="8.2" r="2.3" fill="#afb1b3" stroke="#3c3f41" stroke-width="0.8"/><circle cx="9.4" cy="8.2" r="0.8" fill="#3c3f41"/></svg>
<div class="abs" style="left:1018px;top:746px;width:6px;height:6px;background:radial-gradient(circle at 0 0,rgba(0,0,0,0) 5.2px,#222425 6px)"></div>
<div class="abs" style="left:0;top:751.2px;width:1019px;height:0.8px;background:#56595b"></div>
<div class="t" style="left:481.00px;top:0.00px;font-size:9.80px;color:#b4b4b4;font-weight:bold;">Q4 – main.c</div>
<div class="t" style="left:1.50px;top:20.30px;font-size:9.20px;color:#bbbbbb;font-weight:bold;letter-spacing:-0.383px;">Q4</div>
<div class="t" style="left:36.50px;top:20.30px;font-size:9.16px;color:#bbbbbb;">main.c</div>
<div class="t" style="left:31.00px;top:40.70px;font-size:9.65px;color:#bbbbbb;">Project</div>
<div class="t" style="left:38.80px;top:56.90px;font-size:9.44px;color:#bbbbbb;font-weight:bold;">Q4</div>
<div class="t" style="left:59.00px;top:56.90px;font-size:9.80px;color:#8c9196;">~/CLionProjects/assignmentB/Q4</div>
<div class="t" style="left:51.40px;top:71.30px;font-size:9.98px;color:#bbbbbb;letter-spacing:0.061px;">cmake-build-debug</div>
<div class="t" style="left:51.40px;top:85.70px;font-size:9.86px;color:#bbbbbb;">CMakeLists.txt</div>
<div class="t" style="left:51.40px;top:100.10px;font-size:9.85px;color:#bbbbbb;">main.c</div>
<div class="t" style="left:38.80px;top:114.50px;font-size:9.71px;color:#bbbbbb;">External Libraries</div>
<div class="t" style="left:38.80px;top:128.90px;font-size:9.80px;color:#bbbbbb;">Scratches and Consoles</div>
<div class="t" style="left:285.20px;top:40.40px;font-size:8.30px;color:#bbbbbb;letter-spacing:0.028px;">CMakeLists.txt</div>
<div class="t" style="left:377.00px;top:40.40px;font-size:8.30px;color:#bbbbbb;letter-spacing:-0.040px;">main.c</div>
<div class="t" style="left:796.30px;top:19.70px;font-size:8.50px;color:#bbbbbb;letter-spacing:-0.163px;">Q4 | Debug</div>
<div class="t" style="left:969.60px;top:59.60px;font-size:8.15px;color:#bbbbbb;letter-spacing:-0.041px;">2</div>
<div class="t" style="left:500.30px;top:152.00px;font-size:8.94px;color:#7a7a7a;">size:</div>
<div class="t" style="left:12.50px;top:477.00px;font-size:9.24px;color:#bbbbbb;">Run:</div>
<div class="t" style="left:60.80px;top:477.00px;font-size:8.83px;color:#bbbbbb;letter-spacing:-0.037px;">Q4</div>
<div class="t" style="left:25.80px;top:724.00px;font-size:8.30px;color:#e2e2e2;letter-spacing:-0.345px;">Run</div>
<div class="t" style="left:65.50px;top:724.00px;font-size:8.30px;color:#bbbbbb;letter-spacing:-0.432px;">TODO</div>
<div class="t" style="left:116.40px;top:724.00px;font-size:8.30px;color:#bbbbbb;letter-spacing:-0.081px;">Problems</div>
<div class="t" style="left:179.60px;top:724.00px;font-size:8.30px;color:#bbbbbb;letter-spacing:-0.120px;">Terminal</div>
<div class="t" style="left:239.60px;top:724.00px;font-size:8.30px;color:#bbbbbb;letter-spacing:-0.039px;">Python Packages</div>
<div class="t" style="left:332.50px;top:724.00px;font-size:8.30px;color:#bbbbbb;letter-spacing:-0.156px;">CMake</div>
<div class="t" style="left:384.90px;top:724.00px;font-size:8.30px;color:#bbbbbb;letter-spacing:-0.041px;">Messages</div>
<div class="t" style="left:964.50px;top:724.00px;font-size:8.30px;color:#bbbbbb;letter-spacing:-0.064px;">Event Log</div>
<div class="t" style="left:17.60px;top:739.00px;font-size:8.30px;color:#bbbbbb;letter-spacing:0.092px;">Process finished with exit code 0</div>
<div class="t" style="left:812.70px;top:739.00px;font-size:8.30px;color:#bbbbbb;letter-spacing:-0.114px;">25:1</div>
<div class="t" style="left:837.20px;top:739.00px;font-size:8.30px;color:#bbbbbb;letter-spacing:-0.444px;">LF</div>
<div class="t" style="left:854.70px;top:739.00px;font-size:8.30px;color:#bbbbbb;letter-spacing:-0.063px;">UTF-8</div>
<div class="t" style="left:886.60px;top:739.00px;font-size:8.30px;color:#bbbbbb;letter-spacing:0.010px;">4 spaces</div>
<div class="t" style="left:929.00px;top:739.00px;font-size:8.30px;color:#787878;letter-spacing:-0.061px;">C: Q4 | Debug</div>
</div>
</body>
</html>
